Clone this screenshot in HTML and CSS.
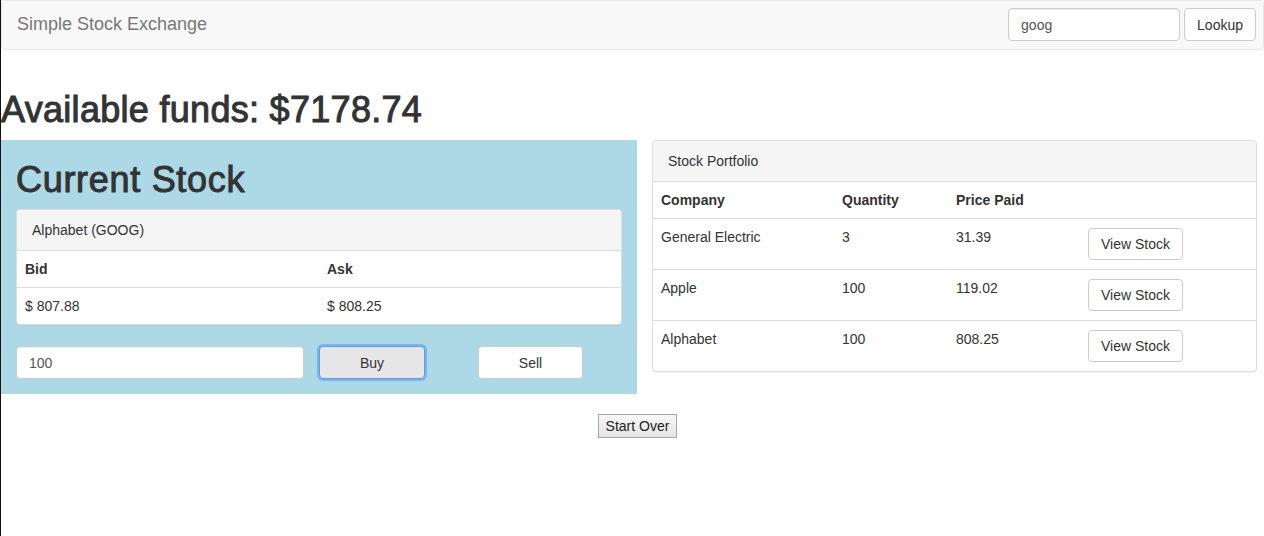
FILE: index.html
```html
<!DOCTYPE html>
<html lang="en">
<head>
<meta charset="utf-8">
<title>Simple Stock Exchange</title>
<link rel="stylesheet" href="styles.css">
</head>
<body>
<div class="page">
  <nav class="navbar">
    <span class="brand">Simple Stock Exchange</span>
    <form class="lookup">
      <input class="form-control lookup-input" type="text" value="goog">
      <button class="btn" type="button">Lookup</button>
    </form>
  </nav>

  <h1 class="funds">Available funds: $7178.74</h1>

  <div class="main-row">
    <section class="current">
      <h1 class="current-title">Current Stock</h1>
      <div class="panel">
        <div class="panel-heading">Alphabet (GOOG)</div>
        <table class="table quote-table">
          <thead>
            <tr><th>Bid</th><th>Ask</th></tr>
          </thead>
          <tbody>
            <tr><td>$ 807.88</td><td>$ 808.25</td></tr>
          </tbody>
        </table>
      </div>
      <div class="trade-row">
        <div class="trade-col-input"><input class="form-control" type="text" value="100"></div>
        <div class="trade-col"><button class="btn btn-buy" type="button">Buy</button></div>
        <div class="trade-col"><button class="btn btn-sell" type="button">Sell</button></div>
      </div>
    </section>

    <section class="panel portfolio">
      <div class="panel-heading">Stock Portfolio</div>
      <table class="table portfolio-table">
        <thead>
          <tr><th class="c-company">Company</th><th class="c-qty">Quantity</th><th class="c-price">Price Paid</th><th class="c-action"></th></tr>
        </thead>
        <tbody>
          <tr><td>General Electric</td><td>3</td><td>31.39</td><td><button class="btn btn-view" type="button">View Stock</button></td></tr>
          <tr><td>Apple</td><td>100</td><td>119.02</td><td><button class="btn btn-view" type="button">View Stock</button></td></tr>
          <tr><td>Alphabet</td><td>100</td><td>808.25</td><td><button class="btn btn-view" type="button">View Stock</button></td></tr>
        </tbody>
      </table>
    </section>
  </div>

  <div class="restart">
    <button class="start-over" type="button">Start Over</button>
  </div>
</div>
</body>
</html>
```

FILE: styles.css
```css
* { box-sizing: border-box; }

html, body {
  margin: 0;
  padding: 0;
  background: #fff;
}

body {
  font-family: "Liberation Sans", Arial, Helvetica, sans-serif;
  font-size: 14px;
  line-height: 20px;
  color: #333;
}

.page {
  border-left: 1px solid #111;
  min-height: 536px;
}

/* Navbar */
.navbar {
  height: 50px;
  background: #f8f8f8;
  border: 1px solid #e7e7e7;
  border-radius: 4px;
  display: flex;
  align-items: flex-start;
  justify-content: space-between;
  padding: 7px 7px 0 15px;
}

.brand {
  font-size: 18px;
  line-height: 20px;
  color: #777;
  margin-top: 6px;
}

.lookup {
  display: flex;
  gap: 4px;
  margin: 0;
}

.lookup-input {
  width: 172px;
}

.form-control {
  height: 33px;
  padding: 6px 12px;
  font-family: inherit;
  font-size: 14px;
  line-height: 20px;
  color: #555;
  background: #fff;
  border: 1px solid #ccc;
  border-radius: 4px;
  box-shadow: inset 0 1px 1px rgba(0, 0, 0, .075);
  outline: none;
}

.btn {
  height: 33px;
  padding: 0 12px;
  font-family: inherit;
  font-size: 14px;
  line-height: 20px;
  color: #333;
  background: #fff;
  border: 1px solid #ccc;
  border-radius: 4px;
  cursor: pointer;
}

/* Headings */
.funds {
  font-size: 36px;
  font-weight: 500;
  line-height: 1.1;
  letter-spacing: 0.3px;
  -webkit-text-stroke: 1px #333;
  margin: 40px 0 10px 0;
  color: #333;
}

.main-row {
  display: flex;
  align-items: flex-start;
  gap: 15px;
}

.current {
  width: 636px;
  flex: none;
  background: #add8e6;
  padding: 0 15px 15px 15px;
  overflow: hidden;
}

.current-title {
  font-size: 36px;
  font-weight: 500;
  line-height: 1.1;
  letter-spacing: 0.7px;
  -webkit-text-stroke: 1px #333;
  margin: 20px 0 10px 0;
}

/* Panels */
.panel {
  background: #fff;
  border: 1px solid #ddd;
  border-radius: 4px;
  box-shadow: 0 1px 1px rgba(0, 0, 0, .05);
  overflow: hidden;
}

.panel-heading {
  background: #f5f5f5;
  padding: 10px 15px;
  border-bottom: 1px solid #ddd;
  line-height: 20px;
}

.table {
  width: 100%;
  border-collapse: collapse;
  border-spacing: 0;
}

.table th {
  text-align: left;
  font-weight: bold;
  padding: 8px;
  line-height: 20px;
  vertical-align: bottom;
}

.table td {
  padding: 8px;
  line-height: 20px;
  vertical-align: top;
  border-top: 1px solid #ddd;
}

.quote-table th { width: 50%; }

.current .panel { margin-bottom: 21px; }

/* Trade row */
.trade-row {
  display: grid;
  grid-template-columns: 318px 159px 159px;
  margin: 0 -15px;
}

.trade-col-input {
  padding: 0 15px;
}

.trade-col-input .form-control {
  width: 100%;
}

.btn-buy {
  width: 106px;
  background: #e6e6e6;
  border-color: #5e9ce6;
  box-shadow: 0 0 1px 2px rgba(80, 150, 240, .55);
}

.btn-sell {
  width: 105px;
}

/* Portfolio */
.portfolio {
  width: 605px;
  flex: none;
}

.portfolio-table .c-company { width: 181px; }
.portfolio-table .c-qty { width: 114px; }
.portfolio-table .c-price { width: 132px; }

.portfolio-table td {
  height: 51px;
}

.btn-view {
  height: 32px;
  margin-top: 1px;
  margin-bottom: 1px;
  display: block;
}

/* Start over */
.restart {
  display: flex;
  justify-content: center;
  padding-left: 10px;
  margin-top: 20px;
}

.start-over {
  height: 24px;
  padding: 0 7px;
  font-family: inherit;
  font-size: 14px;
  color: #222;
  background: linear-gradient(#f8f8f8, #e4e4e4);
  border: 1px solid #a6a6a6;
  border-radius: 0;
}
```
